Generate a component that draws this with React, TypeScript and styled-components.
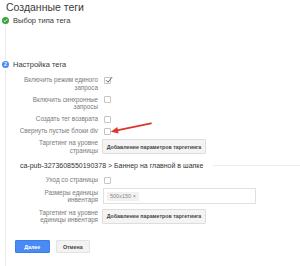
import React from "react";
import styled, { createGlobalStyle } from "styled-components";

const Global = createGlobalStyle`
  html, body { margin: 0; padding: 0; background: #fff; }
  body { font-family: "Liberation Sans", Arial, sans-serif; }
`;

const Page = styled.div`
  position: relative;
  width: 300px;
  height: 266px;
  overflow: hidden;
  padding-left: 2px;
  box-sizing: border-box;
`;

const Title = styled.h1`
  margin: 0 0 0 4px;
  font-size: 10.5px;
  font-weight: normal;
  line-height: 14px;
  color: #3a3a3a;
`;

const StepHeader = styled.div<{ $top: number }>`
  display: flex;
  align-items: center;
  gap: 4px;
  height: 10px;
  margin-top: ${(p) => p.$top}px;
  font-size: 7.5px;
  color: #3a3a3a;
`;

const StepIcon = styled.div<{ $color: string }>`
  width: 7px;
  height: 7px;
  border-radius: 50%;
  background: ${(p) => p.$color};
  color: #fff;
  font-size: 5px;
  font-weight: bold;
  display: flex;
  align-items: center;
  justify-content: center;
  line-height: 1;
`;

const StepBody = styled.div<{ $pad?: number }>`
  margin-left: 3px;
  border-left: 1px solid #ececec;
  padding-top: ${(p) => p.$pad ?? 0}px;
  padding-bottom: 30px;
`;

const Spacer = styled.div<{ $height: number }>`
  margin-left: 3px;
  border-left: 1px solid #ececec;
  height: ${(p) => p.$height}px;
`;

const Form = styled.div`
  display: grid;
  grid-template-columns: 88px 1fr;
  column-gap: 6px;
  row-gap: 4.5px;
  padding-left: 4px;
`;

const Label = styled.div<{ $center?: boolean }>`
  font-size: 6.3px;
  line-height: 7.5px;
  color: #7a7a7a;
  text-align: right;
  white-space: nowrap;
  align-self: ${(p) => (p.$center ? "center" : "start")};
`;

const Control = styled.div<{ $center?: boolean }>`
  display: flex;
  align-items: center;
  align-self: ${(p) => (p.$center ? "center" : "start")};
`;

const Box = styled.div`
  width: 7px;
  height: 7px;
  box-sizing: border-box;
  border: 1px solid #c4c4c4;
  border-radius: 1px;
  margin-top: 0.25px;
  position: relative;
  background: #fff;
  svg {
    position: absolute;
    left: 0px;
    top: -2px;
  }
`;

const SmallButton = styled.div`
  height: 15px;
  width: 104px;
  box-sizing: border-box;
  margin-left: -2px;
  border: 1px solid #dedede;
  border-radius: 1px;
  background: #f4f4f4;
  font-size: 5.3px;
  font-weight: bold;
  color: #444;
  display: flex;
  align-items: center;
  justify-content: center;
  white-space: nowrap;
`;

const Input = styled.div`
  height: 16px;
  width: 153px;
  box-sizing: border-box;
  margin-left: -1px;
  border: 1px solid #e0e0e0;
  display: flex;
  align-items: center;
  padding-left: 3px;
`;

const Chip = styled.span`
  background: #f1f1f1;
  color: #888;
  font-size: 5.5px;
  padding: 1.5px 3px;
  line-height: 6px;
`;

const Breadcrumb = styled.div`
  grid-column: 1 / -1;
  display: flex;
  align-items: center;
  gap: 10px;
  margin: 2px 0 2px 10px;
  font-size: 7px;
  line-height: 9px;
  color: #333;
  white-space: nowrap;
  &::after {
    content: "";
    flex: 1;
    border-top: 1px solid #ececec;
  }
`;

const Actions = styled.div`
  display: flex;
  gap: 6px;
  margin-top: 16.25px;
  padding-left: 9px;
`;

const ActionButton = styled.div<{ $primary?: boolean }>`
  width: 34.5px;
  height: 13px;
  box-sizing: border-box;
  border-radius: 1px;
  border: 1px solid ${(p) => (p.$primary ? "#3d7fe6" : "#e3e3e3")};
  background: ${(p) => (p.$primary ? "#4a8af4" : "#f3f3f3")};
  color: ${(p) => (p.$primary ? "#fff" : "#444")};
  font-size: 5.3px;
  font-weight: bold;
  display: flex;
  align-items: center;
  justify-content: center;
`;

const Annotation = styled.svg`
  position: absolute;
  left: 0;
  top: 0;
  pointer-events: none;
`;

const Check = () => (
  <svg width="8" height="8" viewBox="0 0 8 8">
    <path d="M1 4.2 L3 6.2 L7.2 1" fill="none" stroke="#555" strokeWidth="0.9" />
  </svg>
);

const CheckBox = ({ checked }: { checked?: boolean }) => (
  <Box>{checked && <Check />}</Box>
);

export default function App() {
  return (
    <>
      <Global />
      <Page>
        <Title>Созданные теги</Title>
        <StepHeader $top={1}>
          <StepIcon $color="#3aa33f">
            <svg width="5" height="5" viewBox="0 0 5 5">
              <path d="M0.8 2.6 L2 3.7 L4.2 1.2" fill="none" stroke="#fff" strokeWidth="0.9" />
            </svg>
          </StepIcon>
          Выбор типа тега
        </StepHeader>
        <Spacer $height={34.5} />
        <StepHeader $top={0}>
          <StepIcon $color="#4a8af4">2</StepIcon>
          Настройка тега
        </StepHeader>
        <StepBody $pad={6.75}>
          <Form>
            <Label>
              Включить режим единого
              <br />
              запроса
            </Label>
            <Control>
              <CheckBox checked />
            </Control>

            <Label>
              Включить синхронные
              <br />
              запросы
            </Label>
            <Control>
              <CheckBox />
            </Control>

            <Label>Создать тег возврата</Label>
            <Control>
              <CheckBox />
            </Control>

            <Label>Свернуть пустые блоки div</Label>
            <Control>
              <CheckBox />
            </Control>

            <Label $center>
              Таргетинг на уровне
              <br />
              страницы
            </Label>
            <Control $center>
              <SmallButton>Добавление параметров таргетинга</SmallButton>
            </Control>

            <Breadcrumb>ca-pub-3273608550190378 &gt; Баннер на главной в шапке</Breadcrumb>

            <Label>Уход со страницы</Label>
            <Control>
              <CheckBox />
            </Control>

            <Label $center>
              Размеры единицы
              <br />
              инвентаря
            </Label>
            <Control $center>
              <Input>
                <Chip>500x150 ×</Chip>
              </Input>
            </Control>

            <Label $center>
              Таргетинг на уровне
              <br />
              единицы инвентаря
            </Label>
            <Control $center>
              <SmallButton>Добавление параметров таргетинга</SmallButton>
            </Control>
          </Form>
          <Actions>
            <ActionButton $primary>Далее</ActionButton>
            <ActionButton>Отмена</ActionButton>
          </Actions>
        </StepBody>
        <Annotation width="300" height="266" viewBox="0 0 300 266">
          <path d="M151 123.3 L117 130.4" stroke="#d8392c" strokeWidth="1.8" strokeLinecap="round" />
          <polygon points="110.8,131.7 118.6,133.6 117.3,126.9" fill="#d8392c" />
        </Annotation>
      </Page>
    </>
  );
}
